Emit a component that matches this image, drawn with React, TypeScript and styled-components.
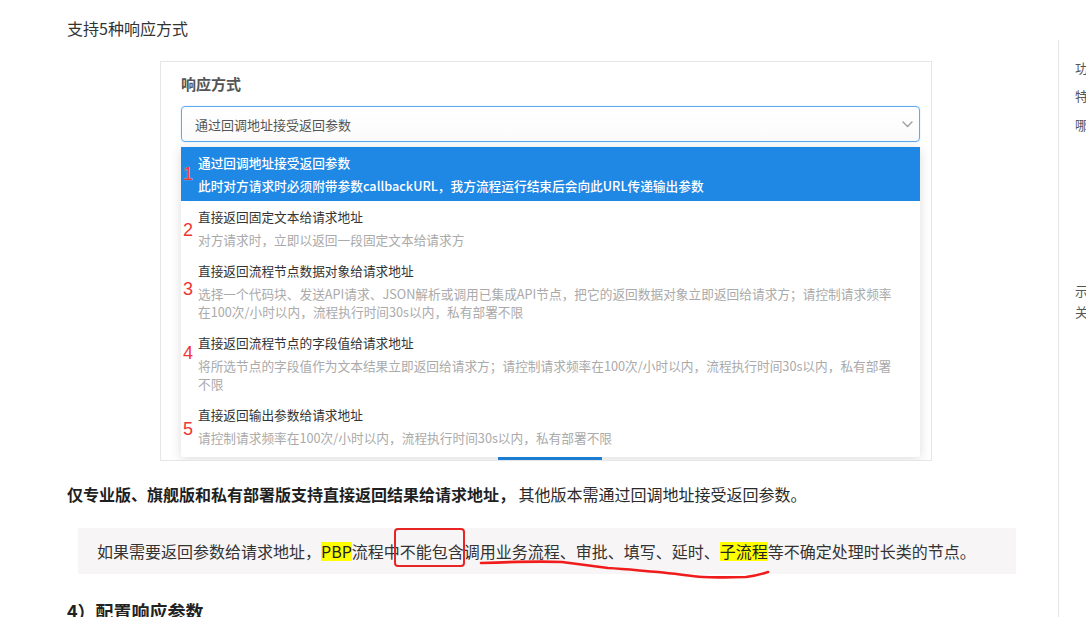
import React from 'react';
import styled, { createGlobalStyle } from 'styled-components';

const GlobalStyle = createGlobalStyle`
  html, body {
    margin: 0;
    padding: 0;
    background: #fff;
    overflow: hidden;
  }
  body {
    font-family: "Noto Sans CJK SC", "Noto Sans", sans-serif;
    color: #333;
  }
`;

const Page = styled.div`
  display: flex;
  width: 1086px;
  height: 617px;
  overflow: hidden;
`;

const Main = styled.main`
  flex-shrink: 0;
  width: 949px;
  padding-left: 67px;
`;

const Para = styled.p`
  margin: 0;
  padding-top: 16px;
  font-size: 16px;
  line-height: 24px;
  color: #333;
`;

const ShotFrame = styled.div`
  box-sizing: border-box;
  width: 772px;
  height: 400px;
  margin: 21px 0 0 93px;
  padding: 12px 0 0 20px;
  border: 1px solid #e6e6e6;
  background: #fff;
  overflow: hidden;
`;

const FieldLabel = styled.div`
  font-size: 15px;
  line-height: 20px;
  font-weight: 700;
  color: #555;
`;

const SelectWrap = styled.div`
  position: relative;
  width: 739px;
  margin-top: 12px;
`;

const SelectBox = styled.div`
  box-sizing: border-box;
  height: 36px;
  display: flex;
  align-items: center;
  justify-content: space-between;
  padding: 0 6px 0 13px;
  border: 1px solid #5eaaee;
  border-radius: 4px;
  background: linear-gradient(#fff, #fbfbfb);
  box-shadow: 0 0 2px rgba(94, 170, 238, 0.35);
  font-size: 13px;
  color: #555;
`;

const Dropdown = styled.div`
  position: absolute;
  top: calc(100% + 5px);
  left: 0;
  width: 739px;
  padding-bottom: 4px;
  background: #fff;
  border-radius: 2px;
  box-shadow: 0 2px 12px rgba(0, 0, 0, 0.14);
  z-index: 2;
`;

const Option = styled.div<{ $active?: boolean }>`
  position: relative;
  padding: 6px 16px 6px 17px;
  background: ${p => (p.$active ? '#1f88e4' : '#fff')};
  color: ${p => (p.$active ? '#fff' : '#333')};
  font-weight: ${p => (p.$active ? 500 : 400)};
`;

const OptionTitle = styled.div`
  font-size: 12.7px;
  line-height: 20px;
`;

const OptionDesc = styled.div<{ $active?: boolean }>`
  margin-top: 4px;
  font-size: 12.7px;
  line-height: 18px;
  color: ${p => (p.$active ? '#fff' : '#aaa')};
`;

const DescLine = styled.span`
  display: block;
  white-space: nowrap;
`;

const Marker = styled.span<{ $top: number }>`
  position: absolute;
  left: 2px;
  top: ${p => p.$top}px;
  font-family: "Liberation Sans", Arial, sans-serif;
  font-size: 18px;
  line-height: 18px;
  font-weight: 400;
  color: #ef3535;
  text-shadow: 0 0 1px #fff;
`;

const SaveButton = styled.button`
  display: block;
  width: 104px;
  height: 30px;
  margin: 313px 0 0 317px;
  padding: 3px 0 0;
  border: none;
  border-radius: 3px;
  background: #1e87e2;
  color: #fff;
  font-family: inherit;
  font-size: 13px;
  line-height: 16px;
  vertical-align: top;
`;

const Notice = styled.p`
  margin: 21px 0 0;
  font-size: 16px;
  line-height: 24px;
  color: #2a2a2a;

  strong {
    font-weight: 700;
    color: #1f1f1f;
  }
`;

const Callout = styled.div`
  position: relative;
  box-sizing: border-box;
  width: 938px;
  height: 46px;
  margin: 22px 0 0 11px;
  padding: 12px 19px 0;
  background: #f7f5f5;
  font-size: 16px;
  line-height: 23px;
  color: #333;
  white-space: nowrap;
`;

const Highlight = styled.span`
  display: inline-block;
  line-height: 19px;
  background: #ffff00;
  color: #222;
`;

const Boxed = styled.span`
  position: relative;
  display: inline-block;
  line-height: 23px;

  &::after {
    content: '';
    position: absolute;
    left: -6px;
    right: -1px;
    top: -12px;
    bottom: -4px;
    border: 2px solid #e82525;
    border-radius: 4px;
  }
`;

const Scribble = styled.svg`
  position: absolute;
  left: 0;
  top: 0;
  overflow: visible;
  pointer-events: none;
`;

const SubHeading = styled.h4`
  margin: 24px 0 0;
  font-size: 18px;
  line-height: 26px;
  font-weight: 700;
  color: #222;
`;

const Aside = styled.aside`
  flex: 1;
  min-width: 0;
  margin: 40px 0 0 42px;
  padding-left: 16px;
  border-left: 1px solid #e6e6e6;
  overflow: hidden;
`;

const TocItem = styled.div<{ $gap: number }>`
  margin-top: ${p => p.$gap}px;
  font-size: 13px;
  line-height: 21px;
  color: #555;
  white-space: nowrap;
`;

const options = [
  {
    title: '通过回调地址接受返回参数',
    desc: ['此时对方请求时必须附带参数callbackURL，我方流程运行结束后会向此URL传递输出参数'],
    mark: 18,
  },
  {
    title: '直接返回固定文本给请求地址',
    desc: ['对方请求时，立即以返回一段固定文本给请求方'],
    mark: 20,
  },
  {
    title: '直接返回流程节点数据对象给请求地址',
    desc: [
      '选择一个代码块、发送API请求、JSON解析或调用已集成API节点，把它的返回数据对象立即返回给请求方；请控制请求频率',
      '在100次/小时以内，流程执行时间30s以内，私有部署不限',
    ],
    mark: 25,
  },
  {
    title: '直接返回流程节点的字段值给请求地址',
    desc: [
      '将所选节点的字段值作为文本结果立即返回给请求方；请控制请求频率在100次/小时以内，流程执行时间30s以内，私有部署',
      '不限',
    ],
    mark: 17,
  },
  {
    title: '直接返回输出参数给请求地址',
    desc: ['请控制请求频率在100次/小时以内，流程执行时间30s以内，私有部署不限'],
    mark: 21,
  },
];

function Chevron() {
  return (
    <svg width="11" height="7" viewBox="0 0 11 7" fill="none">
      <path d="M1 1l4.5 4.5L10 1" stroke="#9a9a9a" strokeWidth="1.3" strokeLinecap="round" strokeLinejoin="round" />
    </svg>
  );
}

export default function App() {
  return (
    <>
      <GlobalStyle />
      <Page>
        <Main>
          <Para>支持5种响应方式</Para>

          <ShotFrame>
            <FieldLabel>响应方式</FieldLabel>
            <SelectWrap>
              <SelectBox>
                <span>通过回调地址接受返回参数</span>
                <Chevron />
              </SelectBox>
              <Dropdown>
                {options.map((o, i) => (
                  <Option key={o.title} $active={i === 0}>
                    <Marker $top={o.mark}>{i + 1}</Marker>
                    <OptionTitle>{o.title}</OptionTitle>
                    <OptionDesc $active={i === 0}>
                      {o.desc.map(line => (
                        <DescLine key={line}>{line}</DescLine>
                      ))}
                    </OptionDesc>
                  </Option>
                ))}
              </Dropdown>
            </SelectWrap>
            <SaveButton>保存</SaveButton>
          </ShotFrame>

          <Notice>
            <strong>仅专业版、旗舰版和私有部署版支持直接返回结果给请求地址，</strong> 其他版本需通过回调地址接受返回参数。
          </Notice>

          <Callout>
            如果需要返回参数给请求地址，<Highlight>PBP</Highlight>流程中<Boxed>不能包含</Boxed>调用业务流程、审批、填写、延时、<Highlight>子流程</Highlight>等不确定处理时长类的节点。
            <Scribble width="938" height="60" viewBox="0 0 938 60">
              <path
                d="M403 35 C 430 34, 460 33, 484 34 C 500 36, 515 38, 530 40 C 550 41, 565 43, 580 44 C 600 46, 612 48, 625 49 C 640 50, 655 49, 668 49 C 678 48, 684 46, 690 44"
                stroke="#f01c1c"
                strokeWidth="2.6"
                fill="none"
                strokeLinecap="round"
                strokeLinejoin="round"
              />
            </Scribble>
          </Callout>

          <SubHeading>4）配置响应参数</SubHeading>
        </Main>

        <Aside>
          <TocItem $gap={17}>功</TocItem>
          <TocItem $gap={7}>特</TocItem>
          <TocItem $gap={8}>哪</TocItem>
          <TocItem $gap={145}>
            示
            <br />
            关
          </TocItem>
        </Aside>
      </Page>
    </>
  );
}
